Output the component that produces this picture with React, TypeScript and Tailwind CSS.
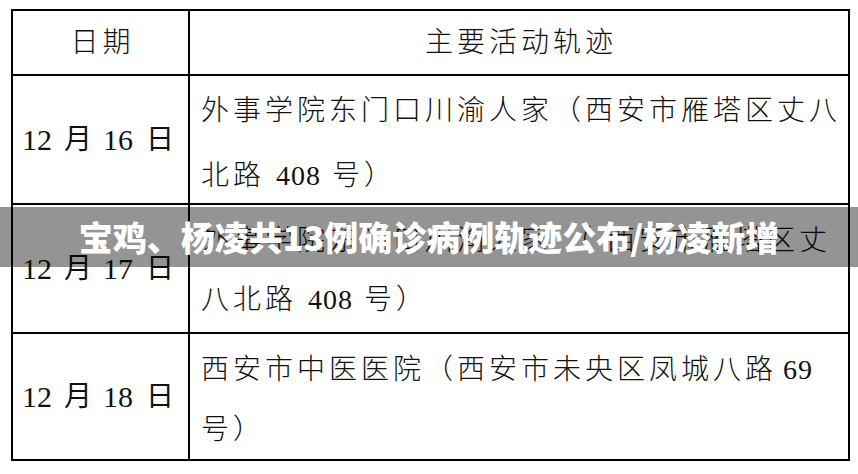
import React from 'react';

const serif = "font-['Liberation_Serif','Noto_Sans_CJK_SC',serif]";

// digits get less tracking than the CJK glyphs
function Run({ text }: { text: string }) {
  const parts = text.split(/(\d+)/);
  return (
    <>
      {parts.map((p, i) =>
        /^\d+$/.test(p) ? (
          <span key={i} className="tracking-[1px]">
            {p}
          </span>
        ) : (
          <span key={i}>{p}</span>
        )
      )}
    </>
  );
}

function DateCell({ day }: { day: string }) {
  return (
    <div className="w-[177px] shrink-0 border-r-2 border-black flex items-center pl-[9px] leading-none text-[#111]">
      <span className="text-[30px]">12</span>
      <span className="text-[28px] ml-[12px]">月</span>
      <span className="text-[30px] ml-[11px]">{day}</span>
      <span className="text-[28px] ml-[13px]">日</span>
    </div>
  );
}

function TrackCell({ lines, className }: { lines: React.ReactNode[]; className: string }) {
  return (
    <div className={`flex-1 pl-[11px] text-[28px] tracking-[4px] text-[#111] font-light ${className}`}>
      {lines.map((l, i) => (
        <div key={i} className="whitespace-nowrap">
          {typeof l === 'string' ? <Run text={l} /> : l}
        </div>
      ))}
    </div>
  );
}

export default function App() {
  return (
    <div className={`relative w-[858px] h-[474px] overflow-hidden bg-white ${serif}`}>
      <div className="ml-[11px] mt-[9px] w-[839px] border-2 border-black">
        {/* header */}
        <div className="h-[65px] flex border-b-2 border-black text-[28px] tracking-[4px] text-[#111] font-light">
          <div className="w-[177px] shrink-0 border-r-2 border-black flex items-center justify-center pl-[4px]">
            日期
          </div>
          <div className="flex-1 flex items-center justify-center pl-[4px]">主要活动轨迹</div>
        </div>

        <div className="h-[129px] flex border-b-2 border-black">
          <DateCell day="16" />
          <TrackCell
            className="pt-[2px] leading-[65px]"
            lines={['外事学院东门口川渝人家（西安市雁塔区丈八', '北路 408 号）']}
          />
        </div>

        <div className="h-[129px] flex border-b-2 border-black">
          <DateCell day="17" />
          <TrackCell
            className="pt-[6px] leading-[59px]"
            lines={['外事学院东门口川渝人家 （ 西安市雁塔区丈', '八北路 408 号）']}
          />
        </div>

        <div className="h-[125px] flex">
          <DateCell day="18" />
          <TrackCell
            className="pt-[6px] leading-[60px]"
            lines={[
              <>
                西安市中医医院（西安市未央区凤城八路
                <span className="ml-[6px] tracking-[1px]">69</span>
              </>,
              '号）',
            ]}
          />
        </div>
      </div>

      {/* headline strip over the table */}
      <div className="absolute left-0 right-0 top-[207px] h-[60px] bg-black/[0.42] flex items-center justify-center">
        <span className="font-['Noto_Sans_CJK_SC',sans-serif] font-black text-[34px] leading-none text-white">
          宝鸡、杨凌共13例确诊病例轨迹公布/杨凌新增
        </span>
      </div>
    </div>
  );
}
